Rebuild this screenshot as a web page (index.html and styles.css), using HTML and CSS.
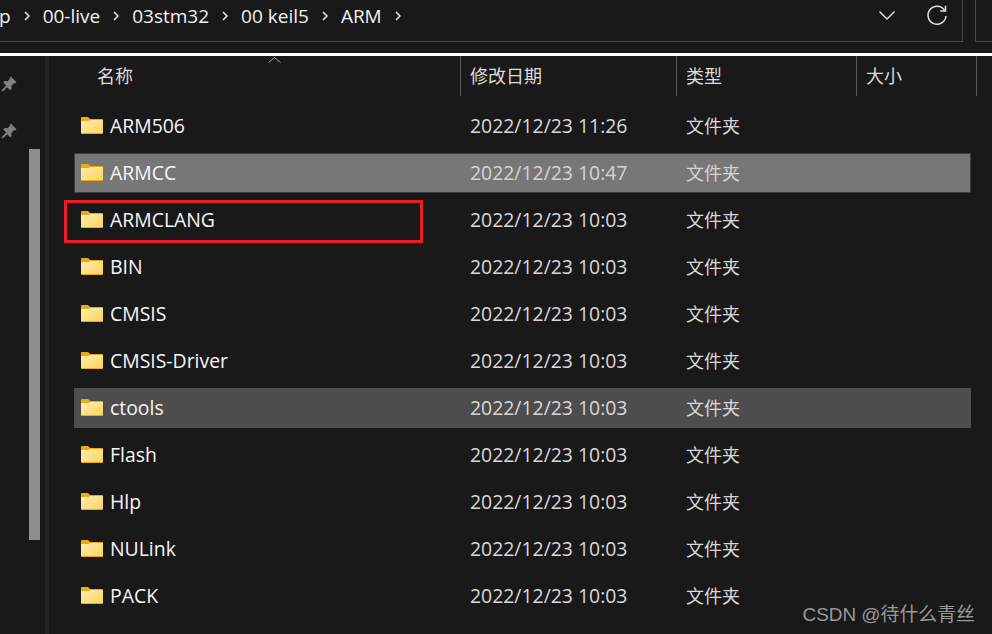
FILE: index.html

```html
<!DOCTYPE html>
<html lang="zh-CN">
<head>
  <meta charset="UTF-8">
  <title>ARM</title>
  <link rel="stylesheet" href="styles.css">
</head>
<body>
  <svg class="defs" width="0" height="0">
    <defs>
      <linearGradient id="folderFill" x1="0" y1="0" x2="1" y2="1">
        <stop offset="0" stop-color="#ffeeb0"/>
        <stop offset="1" stop-color="#fdd35f"/>
      </linearGradient>
      <symbol id="folder" viewBox="0 0 22 17">
        <path d="M0 1C0 .4.400 0 1 0h5.500c.4 0 .7.100 1 .4L9.300 2H21c.6 0 1 .4 1 1v13c0 .6-.4 1-1 1H1c-.6 0-1-.4-1-1z" fill="#eda90f"/>
        <path d="M0 4L7.500 4 9.300 3H22V16H0z" fill="url(#folderFill)"/>
      </symbol>
      <symbol id="pin" viewBox="0 0 16 16">
        <path d="M9.800.5l5.700 5.700-1.200 1.200-1-.3-2.900 2.900.1 3-1.300 1.300-3-3L1.700 15.500.5 14.300l4.700-4.900-3-3 1.300-1.300 3 .1L9.400 2.300l-.8-.6z" fill="#808080"/>
      </symbol>
      <symbol id="crumb" viewBox="0 0 6 10">
        <path d="M1 1l4 4-4 4" fill="none" stroke="#ececec" stroke-width="1.500"/>
      </symbol>
    </defs>
  </svg>

  <div class="toolbar">
    <div class="address">
      <div class="crumbs">
        <span>p</span><svg class="sep"><use href="#crumb"/></svg>
        <span>00-live</span><svg class="sep"><use href="#crumb"/></svg>
        <span>03stm32</span><svg class="sep"><use href="#crumb"/></svg>
        <span>00 keil5</span><svg class="sep"><use href="#crumb"/></svg>
        <span>ARM</span><svg class="sep"><use href="#crumb"/></svg>
      </div>
      <svg class="chevron" width="16" height="9" viewBox="0 0 16 9"><path d="M.5 .5l7.500 7.500 7.500-7.500" fill="none" stroke="#e4e4e4" stroke-width="1.400"/></svg>
      <svg class="refresh" width="22" height="22" viewBox="0 0 22 22"><path d="M18.500 5.200A9 9 0 1 0 20 11" fill="none" stroke="#e4e4e4" stroke-width="1.500"/><path d="M19.500 .8v5.200h-5.200" fill="none" stroke="#e4e4e4" stroke-width="1.500"/></svg>
    </div>
    <div class="search"></div>
  </div>
  <div class="rule"></div>

  <div class="main">
    <aside class="side">
      <div class="pins">
        <svg class="pin" width="16" height="16"><use href="#pin"/></svg>
        <svg class="pin" width="16" height="16"><use href="#pin"/></svg>
      </div>
      <div class="thumb"></div>
    </aside>

    <section class="files">
      <div class="head">
        <div class="col col-name">名称<svg class="sort" width="13" height="6" viewBox="0 0 13 6"><path d="M.5 5.500l6-5 6 5" fill="none" stroke="#a8a8a8"/></svg></div>
        <div class="col col-date">修改日期</div>
        <div class="col col-type">类型</div>
        <div class="col col-size">大小</div>
      </div>

      <div class="row">
        <div class="name"><svg class="folder"><use href="#folder"/></svg>ARM506</div>
        <div>2022/12/23 11:26</div>
        <div class="kind">文件夹</div>
      </div>
      <div class="row row-selected">
        <div class="name"><svg class="folder"><use href="#folder"/></svg>ARMCC</div>
        <div>2022/12/23 10:47</div>
        <div class="kind">文件夹</div>
      </div>
      <div class="row">
        <div class="name"><svg class="folder"><use href="#folder"/></svg>ARMCLANG</div>
        <div>2022/12/23 10:03</div>
        <div class="kind">文件夹</div>
        <div class="mark"></div>
      </div>
      <div class="row">
        <div class="name"><svg class="folder"><use href="#folder"/></svg>BIN</div>
        <div>2022/12/23 10:03</div>
        <div class="kind">文件夹</div>
      </div>
      <div class="row">
        <div class="name"><svg class="folder"><use href="#folder"/></svg>CMSIS</div>
        <div>2022/12/23 10:03</div>
        <div class="kind">文件夹</div>
      </div>
      <div class="row">
        <div class="name"><svg class="folder"><use href="#folder"/></svg>CMSIS-Driver</div>
        <div>2022/12/23 10:03</div>
        <div class="kind">文件夹</div>
      </div>
      <div class="row row-hover">
        <div class="name"><svg class="folder"><use href="#folder"/></svg>ctools</div>
        <div>2022/12/23 10:03</div>
        <div class="kind">文件夹</div>
      </div>
      <div class="row">
        <div class="name"><svg class="folder"><use href="#folder"/></svg>Flash</div>
        <div>2022/12/23 10:03</div>
        <div class="kind">文件夹</div>
      </div>
      <div class="row">
        <div class="name"><svg class="folder"><use href="#folder"/></svg>Hlp</div>
        <div>2022/12/23 10:03</div>
        <div class="kind">文件夹</div>
      </div>
      <div class="row">
        <div class="name"><svg class="folder"><use href="#folder"/></svg>NULink</div>
        <div>2022/12/23 10:03</div>
        <div class="kind">文件夹</div>
      </div>
      <div class="row">
        <div class="name"><svg class="folder"><use href="#folder"/></svg>PACK</div>
        <div>2022/12/23 10:03</div>
        <div class="kind">文件夹</div>
      </div>
    </section>
  </div>

  <div class="watermark">CSDN @待什么青丝</div>
</body>
</html>
```

FILE: styles.css

```css
html, body {
  height: 100%;
}
body {
  margin: 0;
  background-color: #191919;
  color: #f2f2f2;
  font-family: "Open Sans", "Noto Sans CJK SC", sans-serif;
  font-size: 19.4px;
  line-height: 26px;
  overflow: hidden;
  position: relative;
}
.defs {
  position: absolute;
}
.toolbar {
  height: 42px;
  display: flex;
  justify-content: space-between;
}
.address {
  width: 963px;
  box-sizing: border-box;
  border-right: 1px solid #4a4a4a;
  border-bottom: 1px solid #4a4a4a;
  display: flex;
  align-items: center;
  padding-bottom: 10px;
}
.crumbs {
  flex: 1;
  display: flex;
  align-items: center;
  gap: 13px;
  margin-left: -1px;
  font-size: 19px;
}
.sep {
  width: 6px;
  height: 10px;
}
.chevron {
  margin-right: 31px;
}
.refresh {
  margin-right: 14px;
}
.search {
  width: 17px;
  box-sizing: border-box;
  border-left: 1px solid #4a4a4a;
  border-bottom: 1px solid #4a4a4a;
}
.rule {
  height: 3px;
  margin-top: 11px;
  background-color: #fff;
}
.main {
  display: flex;
}
.side {
  width: 49px;
  height: 578px;
  box-sizing: border-box;
  border-right: 4px solid #222;
}
.pins {
  display: flex;
  flex-direction: column;
  gap: 31px;
  padding: 20px 0 0 1px;
}
.pin {
  display: block;
}
.thumb {
  width: 11px;
  height: 391px;
  margin: 10px 0 0 29px;
  background-color: #8f8f8f;
}
.files {
  flex: 1;
}
.head {
  height: 40px;
  display: grid;
  grid-template-columns: 412px 216px 180px 120px;
  color: #dcdcdc;
  font-size: 18px;
}
.col {
  border-right: 1px solid #5a5a5a;
  box-sizing: border-box;
  padding: 7px 0 0 9px;
  position: relative;
}
.col-name {
  padding-left: 48px;
}
.sort {
  position: absolute;
  left: 219px;
  top: 1px;
}
.row {
  width: 897px;
  height: 40px;
  margin: 0 0 7px 25px;
  box-sizing: border-box;
  display: grid;
  grid-template-columns: 389px 216px 1fr;
  align-items: center;
  padding-left: 7px;
  color: #d8d8d8;
  position: relative;
}
.files .head + .row {
  margin-top: 10px;
}
.row-selected {
  background-color: #777;
  border: 1px solid #3c3c3c;
  padding-left: 6px;
  color: #d4d4d4;
}
.row-hover {
  background-color: #4d4d4d;
}
.name {
  display: flex;
  align-items: center;
  gap: 7px;
  color: #f6f6f6;
}
.kind {
  font-size: 18px;
  margin-top: -1px;
}
.folder {
  width: 22px;
  height: 17px;
  margin-top: -2px;
}
.mark {
  position: absolute;
  left: -10px;
  top: 0;
  width: 359px;
  height: 43px;
  box-sizing: border-box;
  border: 3px solid #ed1c24;
}
.watermark {
  position: absolute;
  right: 17px;
  bottom: 6px;
  color: #9a9a9a;
  font-family: "Liberation Sans", "Noto Sans CJK SC", sans-serif;
  font-size: 18.9px;
}
```
